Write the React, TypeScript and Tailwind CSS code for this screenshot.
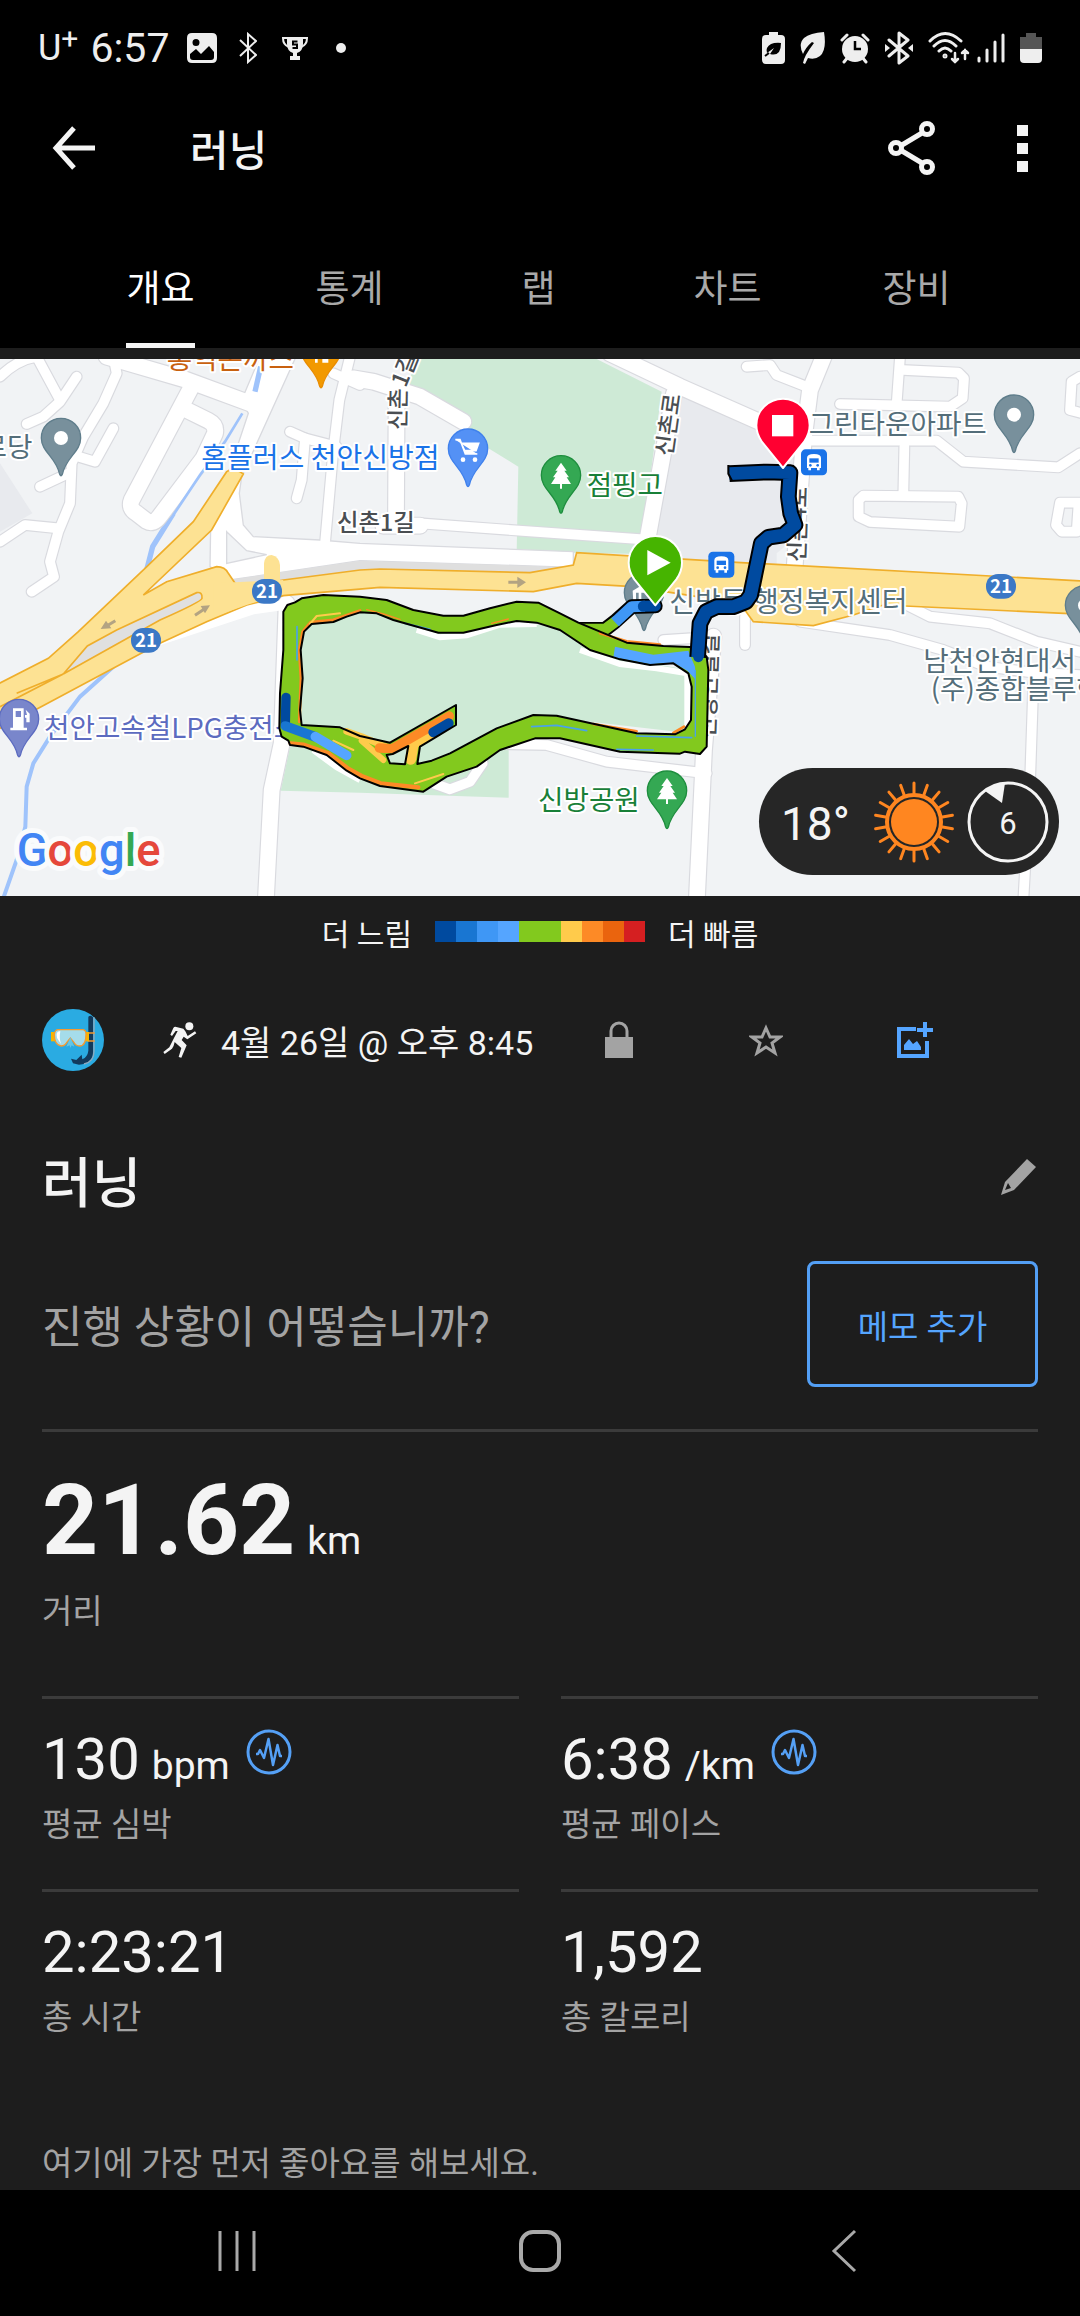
import React, { useState } from 'react';

interface PinProps {
  x: number;
  y: number;
  fill: string;
  stroke: string;
  children?: React.ReactNode;
}

interface StatProps {
  value: string;
  unit?: string;
  label: string;
  zones?: boolean;
}

const TABS = ['개요', '통계', '랩', '차트', '장비'];

const MINOR_ROADS = [
  'M0 80Q50 30 110 20L180 150',
  'M230 80L180 155L130 200L80 222',
  'M340 20L350 70L310 160L250 260L215 340L210 460L175 545L150 635L162 680L95 725',
  'M340 235L285 335L235 320',
  'M120 410L205 370',
  'M0 575L75 525L175 535',
  'M870 245L915 265L905 390L890 445',
  'M915 265L1010 290',
  'M1050 20L1018 150L1000 300L975 580',
  'M1000 70L1080 105',
  'M1260 520L1600 545L1930 568',
  'M2240 50L2310 45L2330 75L2420 110',
  'M2700 20L2690 160',
  'M2520 162L2850 170L2888 145L2892 85L2875 68L2710 60',
  'M2410 272L2810 272L2890 335L3175 352L3240 310',
  'M2713 290L2710 430',
  'M2590 437L2875 440L2885 460L2878 530L2610 516L2576 500L2576 450Z',
  'M3240 80L3215 95L3210 180L3240 188',
  'M3240 458L3180 458L3168 525L3185 545L3230 545L3236 458',
  'M2720 765L2790 800L2970 820L3110 875L3240 905',
  'M2400 815L2670 855L2830 900L2960 950L3100 968L3240 975',
  'M2235 800L2235 885',
  'M3100 1000L3090 1300L3070 1650',
  'M1400 1180L1640 1185L1820 1235L2120 1270',
  'M1300 1300L1350 1318L1410 1295L1448 1240',
  'M1990 870L2070 865',
];

const MAJOR_ROADS = [
  'M320 20L560 90L750 160',
  'M580 100L395 450Q385 475 410 490L440 513Q460 525 478 500L610 325L645 250Q650 225 625 212L560 180',
  'M1060 85L1120 95L1260 140L1390 215',
  'M1190 100L1188 510',
  'M1150 527L1260 527',
  'M1830 10L2040 110L2300 225',
  'M2022 130L1942 570',
  'M2475 10L2430 120L2412 260L2400 420L2382 680',
  'M860 760L845 1180L815 1320L797 1660',
  'M2140 860L2112 1200L2090 1660',
];

const ROUTE =
  'M850 785L862 765L885 757L905 745L970 735L1080 740L1160 750L1240 780L1330 797L1390 797L1470 775L1550 755L1615 758L1680 790L1735 818L1800 845L1880 878L1990 888L2090 892L2120 920L2125 960L2120 1190L2100 1212L2055 1205L2040 1211L1860 1205L1680 1165L1605 1165L1500 1200L1430 1250L1340 1280L1270 1325L1140 1308L1080 1285L1040 1262L980 1215L910 1190L870 1185L865 1172L845 1160L838 1135L840 1030L850 900Z' +
  'M905 1125L900 1080L908 985L902 900L912 845L935 822L1000 816L1040 800L1080 787L1130 790L1180 810L1315 848L1390 848L1490 825L1550 813L1610 818L1680 840L1770 900L1860 928L1950 945L2020 940L2065 970L2075 1010L2073 1110L2055 1138L2025 1153L1910 1150L1670 1097L1600 1095L1490 1135L1350 1210L1295 1232L1252 1242L1260 1190L1310 1160L1368 1125L1368 1065L1170 1178L1080 1158L1020 1132Z' +
  'M1160 1215L1178 1212L1225 1188L1215 1243L1170 1240Z';

const FINISH_ROUTE =
  'M2093 922L2100 820L2118 785L2150 770L2200 770L2238 755L2252 735L2284 580L2305 562L2350 555L2385 525L2372 490L2365 440L2370 368L2300 366L2188 371';

const LEGEND_COLORS = [
  'bg-[#004a9f]',
  'bg-[#1976d2]',
  'bg-[#3f97f5]',
  'bg-[#55a5ff]',
  'bg-[#82c91e]',
  'bg-[#82c91e]',
  'bg-[#ffcb4b]',
  'bg-[#fd8a26]',
  'bg-[#ea640e]',
  'bg-[#d51f21]',
];

function Pin({ x, y, fill, stroke, children }: PinProps) {
  return (
    <g transform={`translate(${x} ${y})`}>
      <path
        d="M0-59A59 59 0 0 1 59 0C59 42 14 58 4 109Q0 118-4 109C-14 58-59 42-59 0A59 59 0 0 1 0-59Z"
        fill={fill}
        stroke={stroke}
        strokeWidth="4"
      />
      {children}
    </g>
  );
}

function Tree() {
  return <path d="M0-38L17-14H10L24 6H17L30 26H3V40H-3V26H-30L-17 6H-24L-10-14H-17Z" fill="#fff" />;
}

function Bus({ x, y }: { x: number; y: number }) {
  return (
    <g transform={`translate(${x} ${y})`}>
      <rect width="78" height="78" rx="14" fill="#1a73e8" />
      <path d="M18 26Q18 14 39 14Q60 14 60 26V56H56V63H48V56H30V63H22V56H18Z" fill="#fff" />
      <path d="M25 27H53V40H25Z" fill="#1a73e8" />
      <circle cx="28" cy="48" r="4" fill="#1a73e8" />
      <circle cx="50" cy="48" r="4" fill="#1a73e8" />
    </g>
  );
}

function RouteShield({ x, y }: { x: number; y: number }) {
  return (
    <g transform={`translate(${x} ${y})`}>
      <rect x="-45" y="-37" width="90" height="74" rx="36" fill="#3b78c6" />
      <text y="20" textAnchor="middle" fontSize="56" fontWeight="700" fill="#fff">
        21
      </text>
    </g>
  );
}

function RouteMap() {
  return (
    <svg
      viewBox="0 27 3240 1611"
      preserveAspectRatio="xMidYMid slice"
      className="block w-full font-['Noto_Sans_CJK_KR',sans-serif]"
      role="img"
      aria-label="러닝 경로 지도"
    >
      <rect y="27" width="3240" height="1611" fill="#f1f3f5" />

      {/* 건물 / 공원 */}
      <path d="M0 340L97 490L0 545Z" fill="#e8eaee" />
      <path d="M2040 130L2260 220L2400 260L2390 560L2330 610L2330 660L1960 625Z" fill="#e8eaee" />
      <path d="M1250 27L1215 130L1400 240L1465 295L1555 350L1550 605L1920 612L1985 125L1790 27Z" fill="#ceead6" />
      <path d="M870 1190L842 1322L1080 1328L1526 1343V1180L1300 1180Z" fill="#ceead6" />

      {/* 하천 */}
      <g fill="none" stroke="#9fc3fb" strokeWidth="12">
        <path d="M520 490L458 590L440 660" strokeWidth="16" />
        <path d="M340 950L240 1040L150 1160L100 1240L80 1310L76 1430L50 1530L8 1650" />
      </g>

      {/* 도로 */}
      <g fill="none" stroke="#d9dadf" strokeLinecap="round" strokeLinejoin="round">
        {MINOR_ROADS.map((d) => (
          <path key={d} d={d} strokeWidth="36" />
        ))}
        {MAJOR_ROADS.map((d) => (
          <path key={d} d={d} strokeWidth="54" />
        ))}
      </g>
      <path
        d="M780 20H888L725 380L718 430L730 525L760 560L960 570L1080 580L1720 605V652L1080 632L690 690L630 650L632 530L745 190L725 150Z"
        fill="#fff"
        stroke="#d9dadf"
        strokeWidth="4"
      />
      <g fill="none" stroke="#fff" strokeLinecap="round" strokeLinejoin="round">
        {MINOR_ROADS.map((d) => (
          <path key={d} d={d} strokeWidth="29" />
        ))}
        {MAJOR_ROADS.map((d) => (
          <path key={d} d={d} strokeWidth="47" />
        ))}
        <path d="M480 870L760 778L850 765" strokeWidth="30" />
      </g>
      <path d="M680 545L740 602L800 614L680 640Z" fill="#f1f3f5" stroke="#d9dadf" strokeWidth="4" />
      <path d="M782 50L765 125" stroke="#9fc3fb" strokeWidth="16" />
      <path d="M727 190L675 275L600 375L520 495" fill="none" stroke="#9fc3fb" strokeWidth="8" />
      <path d="M700 688L1080 632L1720 652L1600 668L1140 657L860 690L715 714Z" fill="#dfdfdf" />

      {/* 21번 국도 */}
      <path
        d="M-10 1004L145 925L235 845L435 655L580 515L680 365Q700 350 730 372L635 540L430 735L500 695L650 650Q675 650 685 670L715 714L850 690L1080 660L1140 657L1590 668L1720 645L1730 608L2210 637L3250 693V793L2650 765L2560 795L2440 827L2260 815L2220 760L1900 710L1730 700L1600 725L1140 712L850 737L740 765L620 815L480 880L115 1075L-10 1140Z"
        fill="#fde293"
        stroke="#efae2b"
        strokeWidth="5"
      />
      <path d="M640 700L850 690L840 733L740 765L640 800Z" fill="#fde293" />
      <path d="M792 715V640Q795 615 815 615Q838 620 840 645V715Z" fill="#fde293" />
      <path d="M350 840L590 728Q608 725 606 745Q604 755 480 810L190 972L262 888Z" fill="#e0e0e0" stroke="#efae2b" strokeWidth="5" />
      <path d="M0 1070L190 972L50 1030" fill="none" stroke="#efae2b" strokeWidth="5" />
      <path d="M1525 697H1560M585 796L612 778M346 812L325 825" fill="none" stroke="#b3a382" strokeWidth="9" />
      <path d="M1552 680L1578 697L1552 714ZM602 768L630 766L615 790ZM318 812L302 837L334 835Z" fill="#b3a382" />

      {/* 공원 안쪽 */}
      <path
        d="M895 1130L895 880L925 800L1100 780L1320 848L1500 815L1680 830L1860 925L2070 960V1150L1640 1100L1440 1180L1280 1250L1080 1250Z"
        fill="#ceead6"
      />
      <path
        d="M1250 840L1320 862L1400 856L1500 824L1610 822M1740 900L1860 942L1970 955L2062 970V1130M940 1200L1010 1252L1080 1290"
        fill="none"
        stroke="#fff"
        strokeWidth="18"
      />

      {/* 지명 */}
      <g fontSize="83" stroke="#fff" strokeWidth="12" strokeLinejoin="round" paintOrder="stroke">
        <text x="97" y="320" textAnchor="end" fill="#546e7a">경로당</text>
        <text x="500" y="57" fill="#c8610f">홍익돈까스</text>
        <text x="604" y="354" fontSize="84" fill="#1a73e8">홈플러스 천안신방점</text>
        <text x="1760" y="436" fill="#188038">점핑고</text>
        <text x="2426" y="251" fill="#546e7a">그린타운아파트</text>
        <text x="132" y="1164" fill="#5c6bc0">천안고속철LPG충전소</text>
        <text x="1614" y="1379" fill="#188038">신방공원</text>
        <text x="2770" y="964" fill="#546e7a">남천안현대서</text>
        <text x="2792" y="1048" fill="#546e7a">(주)종합블루핸</text>
      </g>
      <g fontSize="68" fontWeight="500" fill="#4a4e52" stroke="#fff" strokeWidth="12" strokeLinejoin="round" paintOrder="stroke">
        <text x="1011" y="543" fontSize="70">신촌1길</text>
        <text transform="translate(1217 240) rotate(-89)">신촌</text>
        <text transform="translate(1217 115) rotate(-68)">1길</text>
        <text transform="translate(2016 320) rotate(-82)">신촌로</text>
        <text transform="translate(2414 637) rotate(-88)">신촌4로</text>
        <text transform="translate(2144 1165) rotate(-88)">신방안길길</text>
      </g>

      <Pin x={183} y={264} fill="#78909c" stroke="#5f7d8b">
        <circle r="21" fill="#fff" />
      </Pin>
      <Pin x={963} y={0} fill="#f29900" stroke="#e98c00">
        <path d="M-18 0V38H-10V0ZM4 0V38H22V0Z" fill="#fff" />
      </Pin>
      <Pin x={1404} y={296} fill="#5491f5" stroke="#4081ec">
        <path d="M-38-27H-24L-8 16H28M-20-16H32L24 6H-10Z" fill="#fff" stroke="#fff" strokeWidth="5" />
        <circle cx="-15" cy="33" r="7" fill="#fff" />
        <circle cx="21" cy="33" r="7" fill="#fff" />
      </Pin>
      <Pin x={1683} y={376} fill="#34a853" stroke="#1e8e3e">
        <Tree />
      </Pin>
      <Pin x={3042} y={194} fill="#78909c" stroke="#5f7d8b">
        <circle r="21" fill="#fff" />
      </Pin>
      <Pin x={3255} y={766} fill="#78909c" stroke="#5f7d8b">
        <circle r="21" fill="#fff" />
      </Pin>
      <Pin x={57} y={1107} fill="#7986cb" stroke="#5c6bc0">
        <path d="M-18-32H14V26H24V34H-26V26H-18ZM-10-24V-6H6V-24ZM20-28L32-16V10H22V-4H18V-12H24Z" fill="#fff" fillRule="evenodd" />
      </Pin>
      <Pin x={2001} y={1322} fill="#34a853" stroke="#1e8e3e">
        <Tree />
      </Pin>
      <Pin x={1932} y={728} fill="#78909c" stroke="#5f7d8b">
        <path d="M-34-6L0-26V0H-8V30H-16V0H-24V30H-32Z" fill="#fff" />
      </Pin>
      <text x="2008" y="786" fontSize="84" fill="#546e7a" stroke="#fff" strokeWidth="12" strokeLinejoin="round" paintOrder="stroke">
        신방동 행정복지센터
      </text>
      <RouteShield x={801} y={724} />
      <RouteShield x={438} y={871} />
      <RouteShield x={3003} y={709} />
      <Bus x={2403} y={298} />
      <Bus x={2125} y={605} />

      {/* 러닝 경로 */}
      <g fill="none" strokeLinejoin="round">
        <path d="M1735 838L1815 838L1845 815L1895 770L1966 768" stroke="#000" strokeWidth="44" strokeLinecap="round" />
        <path d="M1735 838L1815 838L1850 812" stroke="#82c91e" strokeWidth="33" />
        <path d="M1845 817L1895 770L1935 769" stroke="#3f97f5" strokeWidth="33" />
        <path d="M1930 769L1966 768" stroke="#004a9f" strokeWidth="33" strokeLinecap="round" />
      </g>
      <path d={ROUTE} fill="#82c91e" fillRule="evenodd" />
      <g fill="none" strokeLinecap="round" strokeLinejoin="round">
        <path d="M898 1115L903 985L898 900L908 845L932 817L1000 810L1080 782" stroke="#fd8a26" strokeWidth="9" />
        <path d="M872 1180L910 1184L985 1210L1045 1256L1085 1278L1142 1300L1255 1312" stroke="#fd8a26" strokeWidth="13" />
        <path d="M1800 850L1880 874L1980 884M1780 1122L1910 1144M2020 1149L2052 1130" stroke="#fd8a26" strokeWidth="8" />
        <path d="M1100 779L1150 792L1200 808M1475 820L1525 807" stroke="#fd8a26" strokeWidth="4" />
        <path d="M1595 1130L1670 1126L1760 1142M1910 1158L2075 1163M1850 1198L1960 1200M891 830V930M1215 820L1290 838" stroke="#4aa3e8" strokeWidth="5" />
        <path d="M1245 1300L1330 1272M930 822L950 798L1020 790M1000 1172L1060 1200" stroke="#ffcb4b" strokeWidth="6" />
        <path d="M1040 1144L1085 1160L1180 1200" stroke="#ffcb4b" strokeWidth="20" />
        <path d="M1085 1172L1150 1230" stroke="#ffcb4b" strokeWidth="18" />
        <path d="M1232 1228L1240 1180L1300 1148" stroke="#ffcb4b" strokeWidth="33" />
        <path d="M1138 1194L1178 1196L1348 1098" stroke="#fd8a26" strokeWidth="28" />
        <path d="M1300 1147L1346 1120" stroke="#004a9f" strokeWidth="30" />
        <path d="M858 1042L856 1122" stroke="#004a9f" strokeWidth="28" />
        <path d="M856 1128L944 1160" stroke="#1976d2" strokeWidth="29" />
        <path d="M946 1160L1040 1216" stroke="#55a5ff" strokeWidth="29" />
      </g>
      <path d="M1845 890L1960 914L2065 902L2085 950L2088 990L2062 962L2020 938L1950 943L1840 922Z" fill="#55a5ff" />
      <path d="M2086 960V1160" stroke="#4aa3e8" strokeWidth="4" />
      <path d={ROUTE} fill="none" stroke="#000" strokeWidth="6" strokeLinejoin="round" />
      <path d={FINISH_ROUTE} fill="none" stroke="#000" strokeWidth="50" strokeLinejoin="round" />
      <path d={FINISH_ROUTE} fill="none" stroke="#004a9f" strokeWidth="38" strokeLinejoin="round" />
      <path d="M2185 345V371L2196 392" fill="none" stroke="#000" strokeWidth="6" />
      <circle cx="2095" cy="922" r="15" fill="#004a9f" />

      {/* 출발 / 도착 */}
      <g stroke="#fff" strokeWidth="6" strokeLinejoin="round">
        <path d="M1966 766L1903 688Q1886 664 1886 638A80 80 0 0 1 2046 638Q2046 664 2029 688Z" fill="#46b400" />
        <path d="M2349 354L2286 276Q2269 252 2269 226A80 80 0 0 1 2429 226Q2429 252 2412 276Z" fill="#ff0031" />
      </g>
      <path d="M1942 600L2012 638L1942 676Z" fill="#fff" />
      <rect x="2316" y="195" width="64" height="64" fill="#fff" />

      <text x="50" y="1549" fontSize="136" stroke="#fafbfc" strokeWidth="30" strokeLinejoin="round" paintOrder="stroke" className="font-[Roboto,sans-serif] font-medium">
        <tspan fill="#4285f4">G</tspan>
        <tspan fill="#e5483b">o</tspan>
        <tspan fill="#fbbc05">o</tspan>
        <tspan fill="#4285f4">g</tspan>
        <tspan fill="#34a853">l</tspan>
        <tspan fill="#e5483b">e</tspan>
      </text>
    </svg>
  );
}

function WeatherBadge() {
  const rays = Array.from({ length: 18 }, (_, i) => i * 20);
  return (
    <div className="absolute right-[21px] bottom-[21px] flex h-[107px] w-[300px] items-center justify-between rounded-full bg-[#262626] pr-[10px] pl-[22px] text-[#f4f4f4]">
      <span className="pt-1 text-[46px] leading-none">18°</span>
      <div className="flex gap-3">
        <svg viewBox="-41 -41 82 82" className="size-[82px]" aria-hidden="true">
          <circle r="23" fill="#ff8620" />
          <circle r="27" fill="none" stroke="#ff8620" strokeWidth="4" />
          {rays.map((deg) => (
            <path key={deg} d="M0-29V-39" transform={`rotate(${deg})`} stroke="#ff8620" strokeWidth="3" strokeLinecap="round" />
          ))}
        </svg>
        <svg viewBox="-41 -41 82 82" className="size-[82px]" aria-label="풍속 6">
          <circle r="39" fill="none" stroke="#f4f4f4" strokeWidth="3" />
          <path d="M-23-31Q-14-39-3-39L-6-19Z" fill="#f4f4f4" />
          <text y="12" textAnchor="middle" fontSize="31" fill="#f4f4f4">6</text>
        </svg>
      </div>
    </div>
  );
}

function StatusBar() {
  return (
    <div className="flex h-[96px] items-center justify-between px-[38px] text-[#eee]">
      <div className="flex items-center">
        <span className="flex text-[36px] leading-[44px]">
          U<sup className="top-0 text-[30px] leading-[26px]">+</sup>
        </span>
        <span className="ml-3 text-[41px] leading-[44px]">6:57</span>
        <svg viewBox="0 0 32 32" className="ml-[17px] size-8" aria-hidden="true">
          <path fillRule="evenodd" fill="#eee" d="M6 1H26Q31 1 31 6V26Q31 31 26 31H6Q1 31 1 26V6Q1 1 6 1ZM10 7A3.5 3.5 0 1 0 10 14A3.5 3.5 0 1 0 10 7ZM4 22V25Q4 28 7 28H25Q28 28 28 25V20L23 14L15 22L10 17Z" />
        </svg>
        <svg viewBox="0 0 18 32" className="ml-[21px] h-8 w-[18px]" fill="none" stroke="#eee" strokeWidth="2" aria-hidden="true">
          <path d="M1 8L17 23L9 30V2L17 9L1 24" />
        </svg>
        <svg viewBox="0 0 28 24" className="ml-6 h-6 w-7" aria-hidden="true">
          <path d="M6 1H22V8Q22 15 16 17V20H19V24H9V20H12V17Q6 15 6 8Z" fill="#eee" />
          <path d="M6 2H2Q2 9 8 11M22 2H26Q26 9 20 11" fill="none" stroke="#eee" strokeWidth="2" />
          <path d="M16.500 5.500H12V8.500H16V12H11.500" fill="none" stroke="#000" strokeWidth="2" />
        </svg>
        <span className="ml-[27px] size-[10px] rounded-full bg-[#eee]" />
      </div>
      <div className="flex items-center gap-[15px]">
        <svg viewBox="0 0 23 32" className="h-8 w-[23px]" aria-hidden="true">
          <path d="M7 0H16V3H19Q23 3 23 7V28Q23 32 19 32H4Q0 32 0 28V7Q0 3 4 3H7Z" fill="#eee" />
          <path d="M19 11Q8 10 5 16Q4 18 5 21L12 16L8 22Q19 25 19 11Z" fill="#000" />
          <path d="M3 24L7 21" stroke="#000" strokeWidth="2" />
        </svg>
        <svg viewBox="0 0 25 32" className="h-8 w-[25px]" aria-hidden="true">
          <path d="M24 0Q27 18 20 24Q15 28 8 26L5 32L3 31Q4 24 14 11L12 10Q6 15 3 22Q-2 12 4 6Q10 1 24 0Z" fill="#eee" />
        </svg>
        <svg viewBox="0 0 30 32" className="h-8 w-[30px]" aria-hidden="true">
          <path d="M2 8L7 3M28 8L23 3M4 30L8 25M26 30L22 25" stroke="#eee" strokeWidth="3" strokeLinecap="round" />
          <circle cx="15" cy="17" r="13" fill="#eee" />
          <path d="M15 9V17H21" fill="none" stroke="#000" strokeWidth="2.500" />
        </svg>
        <svg viewBox="0 0 28 34" className="h-[34px] w-7" aria-hidden="true">
          <path d="M4 9L23 25L14 32V2L23 9L4 25" fill="none" stroke="#eee" strokeWidth="3" strokeLinejoin="round" strokeLinecap="round" />
          <path d="M0 13L5 17L0 21ZM28 13L23 17L28 21Z" fill="#eee" />
        </svg>
        <svg viewBox="0 0 42 34" className="h-[34px] w-[42px]" fill="none" stroke="#eee" strokeWidth="3" strokeLinecap="round" aria-hidden="true">
          <path d="M2 10Q17-5 33 10M6 15Q17 4 28 15M11 20Q17 14 23 20" />
          <circle cx="17" cy="25" r="1" />
          <path d="M27 22V31M24 28L27 31L30 28M37 28V19M34 22L37 19L40 22" strokeWidth="2.500" />
        </svg>
        <svg viewBox="0 0 28 32" className="-ml-2 h-8 w-7" stroke="#eee" strokeWidth="3" strokeLinecap="round" aria-hidden="true">
          <path d="M2 26V29M10 18V29M18 10V29M26 3V29" />
        </svg>
        <svg viewBox="0 0 22 32" className="h-8 w-[22px]" aria-hidden="true">
          <path d="M6 1H16V5H22V17H0V5H6Z" fill="#555" />
          <path d="M0 17H22V27Q22 31 18 31H4Q0 31 0 27Z" fill="#eee" />
        </svg>
      </div>
    </div>
  );
}

function Avatar() {
  return (
    <svg viewBox="39 41 186 186" className="size-[62px]" aria-hidden="true">
      <circle cx="132" cy="134" r="93" fill="#2aabe2" />
      <path d="M178 64Q186 58 192 66V170Q192 206 150 208L132 204L126 190L142 194L158 178L160 192Q176 184 178 166Z" fill="#123a5c" />
      <path d="M195 66V168Q195 200 165 206" fill="none" stroke="#8fa9bd" strokeWidth="4" />
      <path d="M176 113H197M176 137H197" stroke="#f59a2f" strokeWidth="4" />
      <rect x="66" y="110" width="14" height="28" fill="#f7b500" />
      <rect x="168" y="110" width="12" height="28" fill="#f7b500" />
      <path
        d="M88 103H160Q171 103 171 116Q171 152 152 152Q140 152 134 140L124 128L113 142Q108 152 96 152Q76 148 76 118Q77 103 88 103Z"
        fill="#a5dcea"
        stroke="#f59a2f"
        strokeWidth="4"
      />
      <path d="M90 108Q80 110 84 128L96 146Q90 130 94 108Z" fill="#fff" />
      <path d="M124 126L112 154L122 150L124 158L128 150L136 154Z" fill="#63c6e8" />
    </svg>
  );
}

function PulseIcon() {
  return (
    <svg viewBox="0 0 46 46" className="size-[46px]" fill="none" stroke="#55a0f5" aria-hidden="true">
      <circle cx="23" cy="23" r="21" strokeWidth="3" />
      <path d="M10 25H12L14 21L18 29L22.500 10L27 36L31.500 16L34 27H36" strokeWidth="2.500" strokeLinejoin="round" />
    </svg>
  );
}

function Stat({ value, unit, label, zones }: StatProps) {
  return (
    <div className="h-[193px] border-t-3 border-[#3b3b3b] pt-[26px]">
      <div className="flex h-[68px] items-start">
        <p className="text-[58px] leading-[68px]">
          {value}
          {unit && <span className="ml-3 text-[39px]">{unit}</span>}
        </p>
        {zones && (
          <button type="button" className="mt-1 ml-4" aria-label={`${label} 구간`}>
            <PulseIcon />
          </button>
        )}
      </div>
      <p className="mt-[10px] text-[33px] leading-[44px] text-[#a3a3a3]">{label}</p>
    </div>
  );
}

export default function App() {
  const [activeTab, setActiveTab] = useState('개요');

  return (
    <div className="flex min-h-screen flex-col bg-[#1d1d1d] font-['Roboto','Noto_Sans_CJK_KR',sans-serif] text-[#f4f4f4]">
      <header className="bg-black">
        <StatusBar />
        <div className="flex h-[104px] items-center px-[52px]">
          <button type="button" aria-label="뒤로">
            <svg viewBox="0 0 44 44" className="size-11" fill="none" stroke="#f4f4f4" strokeWidth="5" aria-hidden="true">
              <path d="M22 2L4 22L22 42M4 22H43" />
            </svg>
          </button>
          <h1 className="ml-[94px] flex-1 pt-2 text-[42px] leading-[60px] font-medium">러닝</h1>
          <button type="button" aria-label="공유">
            <svg viewBox="0 0 48 54" className="h-[54px] w-12" fill="none" stroke="#f4f4f4" strokeWidth="5" aria-hidden="true">
              <path d="M14 24L34 12M14 30L34 42" />
              <circle cx="8" cy="27" r="5.500" />
              <circle cx="39" cy="8" r="5.500" />
              <circle cx="39" cy="46" r="5.500" />
            </svg>
          </button>
          <button type="button" className="ml-[81px] flex flex-col gap-[7px]" aria-label="더보기">
            <span className="size-[11px] bg-[#f4f4f4]" />
            <span className="size-[11px] bg-[#f4f4f4]" />
            <span className="size-[11px] bg-[#f4f4f4]" />
          </button>
        </div>
        <nav className="grid h-[148px] grid-cols-5 items-end pr-[69px] pl-[66px]">
          {TABS.map((tab) => (
            <button
              key={tab}
              type="button"
              onClick={() => setActiveTab(tab)}
              className={`mx-auto h-[88px] border-b-5 pb-6 text-[37px] leading-[54px] ${
                tab === activeTab ? 'border-[#f4f4f4] text-white' : 'border-transparent text-[#a9a9a9]'
              }`}
            >
              {tab}
            </button>
          ))}
        </nav>
      </header>

      <main className="flex-1 pt-[11px]">
        <div className="relative">
          <RouteMap />
          <WeatherBadge />
        </div>

        <div className="flex h-[74px] items-center justify-center gap-[23px] text-[30px] leading-[42px]">
          <span className="pt-1">더 느림</span>
          <div className="mb-1 flex">
            {LEGEND_COLORS.map((color, i) => (
              <span key={i} className={`h-[21px] w-[21px] ${color}`} />
            ))}
          </div>
          <span className="pt-1">더 빠름</span>
        </div>

        <div className="px-[42px]">
          <div className="mt-[38px] flex h-[64px] items-center">
            <Avatar />
            <svg viewBox="0 0 100 108" className="ml-[59px] h-9 w-[34px]" fill="#f4f4f4" aria-hidden="true">
              <circle cx="78" cy="13" r="12" />
              <path d="M36 14L60 20L66 28L73 42L95 28L99 34L72 52L61 44L55 54L70 70L54 107L46 105L54 78L34 60Q32 72 26 80L4 96L0 90L18 76L32 48L43 27H37L26 42L21 38L30 18Q32 14 36 14Z" />
            </svg>
            <p className="ml-6 pt-[6px] text-[34px] leading-[52px]">4월 26일 @ 오후 8:45</p>
            <button type="button" className="ml-[72px]" aria-label="비공개">
              <svg viewBox="0 0 28 38" className="h-[38px] w-7" aria-hidden="true">
                <rect y="16" width="28" height="21" fill="#a3a3a3" />
                <path d="M6 17V10A8 8 0 0 1 22 10V17" fill="none" stroke="#a3a3a3" strokeWidth="3" />
              </svg>
            </button>
            <button type="button" className="ml-[116px]" aria-label="즐겨찾기">
              <svg viewBox="0 0 34 34" className="size-[34px]" fill="none" stroke="#a3a3a3" strokeWidth="3" aria-hidden="true">
                <path d="M17 5L21 14L31 14L23 20L26 30L17 24L8 30L11 20L3 14L13 14Z" />
              </svg>
            </button>
            <button type="button" className="ml-[114px]" aria-label="사진 추가">
              <svg viewBox="0 0 36 36" className="size-9" aria-hidden="true">
                <path d="M19 7H2V34H30V19" fill="none" stroke="#55a5ff" strokeWidth="4" />
                <path d="M28 0V15M20 8H36" stroke="#55a5ff" strokeWidth="4" />
                <path d="M7 28V23L12 17L16 22L20 19L24 25V28Z" fill="#55a5ff" />
              </svg>
            </button>
          </div>

          <div className="mt-[76px] flex h-[74px] items-center justify-between">
            <h2 className="text-[54px] leading-[70px] font-medium">러닝</h2>
            <button type="button" className="mb-4" aria-label="이름 수정">
              <svg viewBox="0 0 38 38" className="size-[38px]" aria-hidden="true">
                <path fillRule="evenodd" d="M27 1L36 9L14 32L1 37L5 24ZM8 25L5 32L11 30Z" fill="#a3a3a3" />
              </svg>
            </button>
          </div>

          <div className="mt-[39px] flex items-center justify-between">
            <p className="pt-2 text-[44px] leading-[60px] text-[#a3a3a3]">진행 상황이 어떻습니까?</p>
            <button
              type="button"
              className="h-[126px] w-[231px] rounded-lg border-3 border-[#539ff5] pt-2 text-[33px] leading-[44px] text-[#55a5ff]"
            >
              메모 추가
            </button>
          </div>

          <section className="mt-[42px] h-[267px] border-t-3 border-[#3b3b3b] pt-[32px]">
            <p className="text-[98px] leading-[114px] font-bold">
              21.62
              <span className="ml-3 text-[39px] font-normal">km</span>
            </p>
            <p className="-mt-2 text-[33px] leading-[44px] text-[#a3a3a3]">거리</p>
          </section>

          <section className="grid grid-cols-2 gap-x-[42px]">
            <Stat value="130" unit="bpm" label="평균 심박" zones />
            <Stat value="6:38" unit="/km" label="평균 페이스" zones />
            <Stat value="2:23:21" label="총 시간" />
            <Stat value="1,592" label="총 칼로리" />
          </section>

          <p className="mt-[60px] text-[33px] leading-[44px] text-[#a3a3a3]">여기에 가장 먼저 좋아요를 해보세요.</p>
        </div>
      </main>

      <footer className="flex h-[126px] items-center justify-around bg-black px-[84px] pb-1">
        <button type="button" aria-label="최근 앱">
          <svg viewBox="0 0 44 44" className="size-11" stroke="#a9a9a9" strokeWidth="3" aria-hidden="true">
            <path d="M6 2V42M23 2V42M40 2V42" />
          </svg>
        </button>
        <button type="button" aria-label="홈">
          <svg viewBox="0 0 44 44" className="size-11" fill="none" stroke="#a9a9a9" strokeWidth="4" aria-hidden="true">
            <rect x="3" y="3" width="38" height="38" rx="12" />
          </svg>
        </button>
        <button type="button" aria-label="이전">
          <svg viewBox="0 0 44 44" className="size-11" fill="none" stroke="#a9a9a9" strokeWidth="3" aria-hidden="true">
            <path d="M33 2L12 22L33 42" />
          </svg>
        </button>
      </footer>
    </div>
  );
}
